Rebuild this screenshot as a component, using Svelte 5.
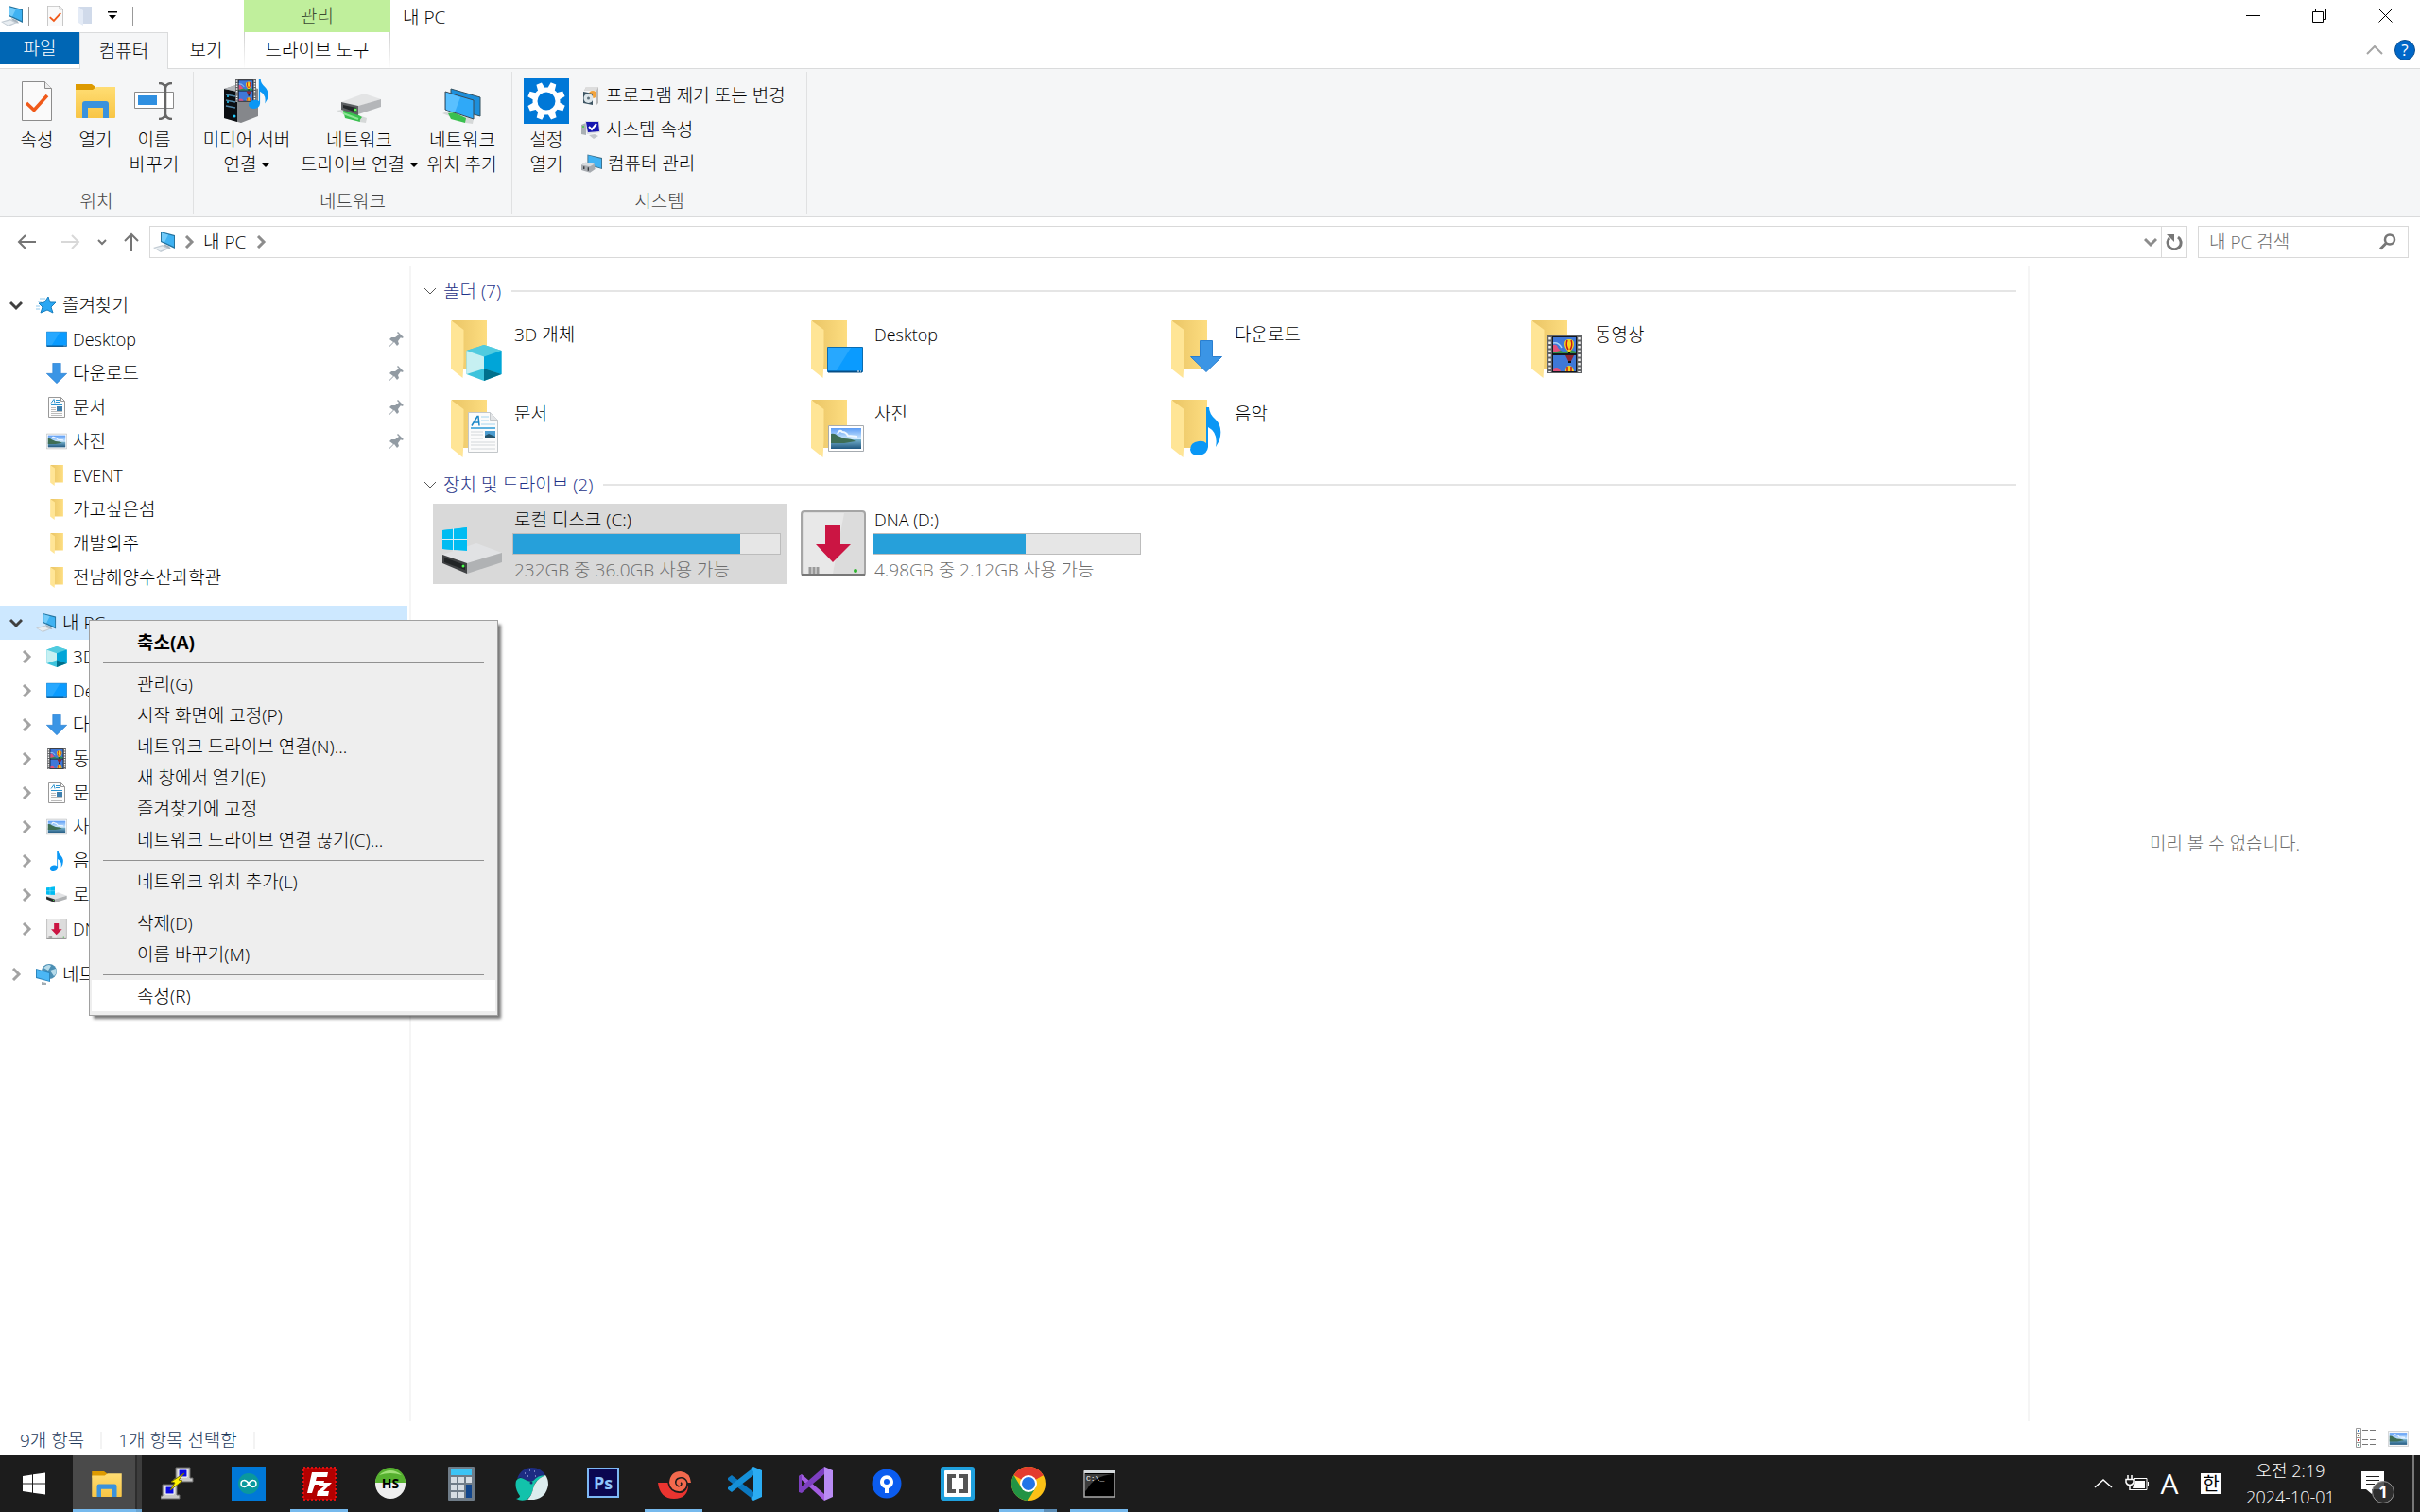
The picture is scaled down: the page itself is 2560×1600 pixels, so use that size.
<script lang="ts">
	type Place = { icon: string; label: string; pinned?: boolean; latin?: boolean };
	type Task = { id: string; label: string; state?: 'active' | 'open' | 'stacked' };

	const boxes: Record<string, string> = {
		pc: '0 0 24 22',
		sheet: '0 0 32 42',
		page: '0 0 15 20',
		explorer: '0 0 42 36',
		rename: '0 0 42 40',
		server: '0 0 48 46',
		netdrive: '0 0 48 32',
		netplace: '0 0 42 38',
		gear: '0 0 48 48',
		uninstall: '0 0 18 21',
		sysprops: '0 0 20 20',
		manage: '0 0 24 21',
		star: '0 0 22 18',
		desktop: '0 0 38 28',
		download: '0 0 34 34',
		doc: '0 0 32 43',
		note: '0 0 18 22',
		picture: '0 0 38 28',
		folder: '0 0 38 61',
		cube: '0 0 38 38',
		video: '0 0 36 40',
		music: '0 0 33 51',
		local: '0 0 64 50',
		removable: '0 0 70 70',
		network: '0 0 22 22',
		pin: '0 0 16 16',
		details: '0 0 22 22'
	};

	const quick: Place[] = [
		{ icon: 'desktop', label: 'Desktop', pinned: true, latin: true },
		{ icon: 'download', label: '다운로드', pinned: true },
		{ icon: 'note', label: '문서', pinned: true },
		{ icon: 'picture', label: '사진', pinned: true },
		{ icon: 'folder', label: 'EVENT', latin: true },
		{ icon: 'folder', label: '가고싶은섬' },
		{ icon: 'folder', label: '개발외주' },
		{ icon: 'folder', label: '전남해양수산과학관' }
	];

	const devices: Place[] = [
		{ icon: 'cube', label: '3D 개체' },
		{ icon: 'desktop', label: 'Desktop', latin: true },
		{ icon: 'download', label: '다운로드' },
		{ icon: 'video', label: '동영상' },
		{ icon: 'note', label: '문서' },
		{ icon: 'picture', label: '사진' },
		{ icon: 'music', label: '음악' },
		{ icon: 'local', label: '로컬 디스크 (C:)' },
		{ icon: 'removable', label: 'DNA (D:)', latin: true }
	];

	// where each badge sits on the 72px folder
	const folders = [
		{ icon: 'cube', label: '3D 개체', x: 27, y: 31, w: 38, h: 38 },
		{ icon: 'desktop', label: 'Desktop', x: 28, y: 33, w: 38, h: 28, latin: true },
		{ icon: 'download', label: '다운로드', x: 31, y: 26, w: 34, h: 34 },
		{ icon: 'video', label: '동영상', x: 28, y: 21, w: 36, h: 40 },
		{ icon: 'doc', label: '문서', x: 29, y: 18, w: 32, h: 43 },
		{ icon: 'picture', label: '사진', x: 29, y: 32, w: 38, h: 28 },
		{ icon: 'music', label: '음악', x: 31, y: 13, w: 33, h: 51 }
	];

	const drives = [
		{ icon: 'local', label: '로컬 디스크 (C:)', free: '232GB 중 36.0GB 사용 가능', used: 85 },
		{ icon: 'removable', label: 'DNA (D:)', free: '4.98GB 중 2.12GB 사용 가능', used: 57, latin: true }
	];

	const menu = [
		['축소(A)'],
		[
			'관리(G)',
			'시작 화면에 고정(P)',
			'네트워크 드라이브 연결(N)...',
			'새 창에서 열기(E)',
			'즐겨찾기에 고정',
			'네트워크 드라이브 연결 끊기(C)...'
		],
		['네트워크 위치 추가(L)'],
		['삭제(D)', '이름 바꾸기(M)'],
		['속성(R)']
	];

	const tasks: Task[] = [
		{ id: 'start', label: '시작' },
		{ id: 'files', label: '파일 탐색기', state: 'active' },
		{ id: 'putty', label: 'PuTTY' },
		{ id: 'arduino', label: 'Arduino' },
		{ id: 'filezilla', label: 'FileZilla', state: 'open' },
		{ id: 'heidi', label: 'HeidiSQL' },
		{ id: 'calc', label: '계산기' },
		{ id: 'whale', label: 'Whale' },
		{ id: 'ps', label: 'Photoshop' },
		{ id: 'nautilus', label: 'Nautilus', state: 'open' },
		{ id: 'vscode', label: 'VS Code' },
		{ id: 'vs', label: 'Visual Studio' },
		{ id: 'sourcetree', label: 'Sourcetree' },
		{ id: 'brackets', label: 'Brackets' },
		{ id: 'chrome', label: 'Chrome', state: 'stacked' },
		{ id: 'cmd', label: '명령 프롬프트', state: 'open' }
	];
</script>

{#snippet art(name: string)}
	{#if name === 'pc'}
		<path d="M8 0l15 4v14L8 11z" fill="#26749f" />
		<path d="M9 1.500l13 3.500v11L9 10z" fill="#3fb2f2" />
		<path d="M9 1.500l7 2-4 8-3-1.500z" fill="#73cbf9" />
		<path d="M11 13l6 2.500 2 3-6-.5z" fill="#a9b4bd" />
		<path d="M0 17l10-3 7 4-9 4z" fill="#c3ccd4" />
		<path d="M2 17.500l8-2 4.500 2.500-7 2.500z" fill="#e9eef2" />
	{:else if name === 'sheet'}
		<path d="M.5.5h24l7 7v34H.5z" fill="#fafafa" stroke="#8c8c8c" />
		<path d="M24.500.5v7h7" fill="#ececec" stroke="#8c8c8c" />
		<path d="M5 23l8 7.500L27 15" fill="none" stroke="#f05a1a" stroke-width="3.500" />
	{:else if name === 'page'}
		<path d="M0 0h14v18H5z" fill="#d0daea" />
		<path d="M0 0l5 4v16l-5-3z" fill="#e4ebf6" />
	{:else if name === 'explorer'}
		<path d="M0 0h17l4 3v6H0z" fill="#dd9a00" />
		<path d="M0 6h18l4-3h20v32q0 1-1 1H1q-1 0-1-1z" fill="url(#gold)" />
		<path d="M7 36V21q0-3 3-3h22q3 0 3 3v15h-6V25H13v11z" fill="#3a92dd" />
	{:else if name === 'rename'}
		<path d="M.5 10.500h41v17H.5z" fill="#fff" stroke="#8a8a8a" />
		<path d="M4 14h20v10H4z" fill="#2f8fe0" />
		<path d="M33 2v36M26 1q6 0 7 5 1-5 7-5M26 39q6 0 7-5 1 5 7 5" fill="none" stroke="#666" stroke-width="2.500" />
	{:else if name === 'server'}
		<path d="M0 10L16 5l20 5v29l-18 7-18-5z" fill="#85878b" />
		<path d="M0 10l14 3v32L0 41z" fill="#0b0e12" />
		<path d="M0 10L16 5l20 5-22 3z" fill="#b3b6ba" />
		<path d="M2 16l10 2M2 22l10 2M2 28l10 2" stroke="#4f84a5" stroke-width="1.500" />
		<circle cx="4" cy="18" r="1" fill="#2cf" /><circle cx="4" cy="24" r="1" fill="#2cf" />
		<circle cx="11" cy="39" r="1.500" fill="#2cf" />
		<svg x="12" y="0" width="22" height="24" viewBox="0 0 36 40" preserveAspectRatio="none">{@render art('video')}</svg>
		<svg x="26" y="0" width="21" height="31" viewBox="0 0 33 51" preserveAspectRatio="none">{@render art('music')}</svg>
	{:else if name === 'netdrive'}
		<path d="M0 18l6-1 26 9-1 5-7-1z" fill="#d5d8d8" />
		<path d="M7 18l6-1 14 8q-3 3-2 5L9 26z" fill="#3ac04f" />
		<path d="M7 21l16 6" stroke="#8be693" stroke-width="2" />
		<path d="M5 9L29 0l18 6-23 7z" fill="#e3e4e5" />
		<path d="M5 9l18 4v10L5 17z" fill="#5c5f62" />
		<path d="M7 12l14 3v5L7 15z" fill="#24282a" />
		<path d="M23 13l24-7v8l-24 8z" fill="#b4b6b9" />
		<circle cx="20" cy="17" r="1.500" fill="#5f5" />
	{:else if name === 'netplace'}
		<path d="M0 27l5-2 28 8-1 5-7-1z" fill="#d5d8d8" />
		<path d="M6 27l6-1 13 6-1 5-15-4z" fill="#3ac04f" />
		<path d="M9 1l31 9v20L9 21z" fill="#1d8fdb" stroke="#34515f" />
		<path d="M3 4l30 9v20L3 23z" fill="#2fa9f8" stroke="#3c4b55" />
		<path d="M4 5l15 5-6 16-9-3z" fill="#59c0ff" />
	{:else if name === 'gear'}
		<path d="M0 0h48v48H0z" fill="#0078d7" />
		<circle cx="24" cy="24" r="12" fill="none" stroke="#fff" stroke-width="5" />
		{#each [22, 67, 112, 157, 202, 247, 292, 337] as a}
			<path d="M20 11l1-7h6l1 7z" fill="#fff" transform="rotate({a} 24 24)" />
		{/each}
	{:else if name === 'uninstall'}
		<path d="M4 1h13v17l-3 3V5H2z" fill="#b9b9b9" />
		<path d="M4 1h13l-2 4H2z" fill="#ddd" />
		<circle cx="11" cy="9" r="4" fill="#f2a33c" />
		<path d="M1 6l10 2v12L1 18z" fill="#3d5563" />
		<circle cx="6.500" cy="13" r="5" fill="#dde6ea" /><circle cx="6.500" cy="13" r="1.500" fill="#60737d" />
	{:else if name === 'sysprops'}
		<path d="M0 5l5-2v13l-5-1z" fill="#aab0b4" />
		<path d="M4 1h15l1 12-14 2z" fill="#d9dbe2" />
		<path d="M5 2h13l1 10-12 1z" fill="#1515b0" />
		<path d="M8 7l3 3 5-6" fill="none" stroke="#fff" stroke-width="2" />
		<path d="M8 16l6-1 4 2-5 3z" fill="#c4c8cc" /><circle cx="2" cy="7" r="1" fill="#4c4" />
	{:else if name === 'manage'}
		<path d="M7 0l17 4v13L7 12z" fill="#3c6f8b" />
		<path d="M8 1l15 4v11L8 11z" fill="#42b3f3" />
		<path d="M0 12l5-3 10 2 1 6-6 4-10-3z" fill="#a7abb0" />
		<path d="M0 12l5-3 10 2-5 3z" fill="#d9dcdf" />
		<path d="M3 14v3M8 15v4" stroke="#383c40" stroke-width="1.500" />
	{:else if name === 'star'}
		<path d="M13 0l2 6 6 0-5 5 2 6-6-3-7 3 2-6-4-4 6-1z" fill="#2aa7f3" stroke="#1b7fbe" />
		<path d="M4 2h6M2 5h4M0 10h4M0 13h4" stroke="#8fc8ec" />
	{:else if name === 'desktop'}
		<path d="M.5.5h37v26H.5z" fill="#0a9bff" stroke="#0b6cb0" />
		<path d="M1 1h24L10 25H1z" fill="#27a8ff" />
		<path d="M1 26.500h36" stroke="#064e86" stroke-width="2" />
		<path d="M32 26h2M35 26h1" stroke="#fff" />
	{:else if name === 'download'}
		<path d="M10.500.5h13v17h10L17 33.500.5 17.500h10z" fill="#3b95e5" stroke="#2a7fd0" />
	{:else if name === 'doc'}
		<path d="M.5.5h23l8 8v34H.5z" fill="#fbfbfb" stroke="#c3c7ca" />
		<path d="M23.500.5v8h8" fill="#e4e6e8" stroke="#c3c7ca" />
		<path d="M4 14.500l6-10h1l1 10M6.500 11h5" fill="none" stroke="#1a86c7" stroke-width="1.500" />
		<path d="M14 5h8M14 9h8M14 13h15" stroke="#a6d5ee" />
		<path d="M3 17h26" stroke="#5fb2df" stroke-width="2" />
		<path d="M3 21h13M3 24h13M3 28h13M3 32h26M3 35h26M3 39h26" stroke="#d3d7da" />
		<path d="M18 20h11v8H18z" fill="#4c9ccf" /><path d="M18 25l4-2 7 3v2H18z" fill="#24536b" />
	{:else if name === 'note'}
		<path d="M.5.5h13l4 4v17H.5z" fill="#fdfdfd" stroke="#999" />
		<path d="M13.500.5v4h4" fill="none" stroke="#999" />
		<path d="M3 6.500l3-4 1 4M8 3.500h4M8 5.500h4M3 8.500h12" fill="none" stroke="#2b93cf" />
		<path d="M3 11.500h5M3 13.500h5M3 15.500h12M3 17.500h12M3 19.500h12" stroke="#bbb" />
		<path d="M9 10h6v5H9z" fill="#3d7fae" />
	{:else if name === 'picture'}
		<path d="M.5.5h37v27H.5z" fill="#fff" stroke="#a6abb0" />
		<path d="M3 3h32v12H3z" fill="url(#sky)" />
		<path d="M3 15h32v10H3z" fill="url(#sea)" />
		<path d="M3 9q4-1 7 2l7 3q8 0 12 3l-12 2H3z" fill="#3e6e55" />
		<path d="M10 9q2-5 5-2 4 0 6 4l10 1" fill="none" stroke="#eef7ff" stroke-width="2" />
	{:else if name === 'folder'}
		<path d="M1 0h37v51H12z" fill="url(#tan)" />
		<path d="M0 0l13.500 10v34l-1 17L0 51z" fill="#ffe596" />
	{:else if name === 'cube'}
		<path d="M19 0l18.500 6v25L19 38 .5 31V6z" fill="#3cc3dc" />
		<path d="M19 0l18.500 6L19 12.500.5 6z" fill="#50cbdf" />
		<path d="M.5 6L19 12.500V25L.5 31z" fill="#c6f0f2" />
		<path d="M37.500 6L19 12.500V25l18.500 6z" fill="#00a5d8" />
		<path d="M19 25l18.500 6L19 38z" fill="#00708c" />
	{:else if name === 'video'}
		<path d="M0 0h36v40H0z" fill="#616366" />
		<path d="M2.500 2v37M33.500 2v37" stroke="#f1f1f1" stroke-width="2.500" stroke-dasharray="2.500 2" />
		<path d="M5 1h26v38H5z" fill="#15181f" />
		<path d="M6 2h24v17H6zM6 21h24v17H6z" fill="#3f78d8" />
		<path d="M6 14l6 1 6 3 6-3 6 2v2H6z" fill="#2f8f4a" />
		<path d="M6 10q4-1 5 3l3 3-8 2zM6 35q6-3 8 3H6z" fill="#e0507a" />
		<path d="M6 8q6-1 9 5" fill="none" stroke="#a8d4f5" stroke-width="1.500" />
		<path d="M18 9q0-5 5-5t5 5q0 4-4 8h-2q-4-4-4-8zM19 38q0-6 4-6t5 6z" fill="#f6d51d" />
		<path d="M21 5q-2 5 1 10M25 5q2 5-1 10M21 33v5M25 33v5" fill="none" stroke="#c9151b" stroke-width="1.500" />
		<path d="M19 21h9l-3 6h-3z" fill="#8f2530" /><path d="M22 17h2v2h-2zM22 27h3v2h-3z" fill="#111" />
	{:else if name === 'music'}
		<path d="M17 0h3q0 7 7 13 8 8 4 22l-4 7q3-15-8-21v21q-1 8-10 9-8 0-9-6 0-8 9-9 5-1 8 2z" fill="#0a97f5" />
	{:else if name === 'local'}
		<path d="M0 3l11-1v10H0zM12 2l14-2v12H12zM0 13h11v11L0 23zM12 13h14v12l-14-1z" fill="#00bcf2" />
		<path d="M0 29l36-12 27 10-37 11z" fill="#e1e2e4" />
		<path d="M0 29l26 9v11L0 38z" fill="#404244" />
		<path d="M26 38l37-11v10L26 49z" fill="#b0b2b4" />
		<path d="M2 32l22 8v5L2 37z" fill="#222526" /><circle cx="22" cy="41" r="1.500" fill="#4cff4c" />
		<path d="M0 3l26-3v25L0 23z" fill="#00bcf2" /><path d="M11.500 1v24M0 12.500h26" stroke="#d9eef5" />
	{:else if name === 'removable'}
		<rect x="1" y="1" width="67" height="68" rx="3" fill="#dcdcdc" stroke="#a5a5a5" stroke-width="2" />
		<path d="M4 3h42L34 67H4z" fill="#e8e8e8" /><path d="M1 68h67" stroke="#777" stroke-width="2" />
		<path d="M26 16h16v20h11L34 55 16 36h10z" fill="#cb1543" />
		<path d="M10 60v7M14 60v7M18 60v7" stroke="#999" stroke-width="3" /><circle cx="58" cy="64" r="2" fill="#2db52d" />
	{:else if name === 'network'}
		<circle cx="14" cy="8" r="8" fill="#4b8fb4" />
		<path d="M8 4q5-5 8-2l-3 5zM15 7l6-2q2 5-2 8z" fill="#b6dbea" />
		<path d="M0 5l15 4v10L0 15z" fill="#2d86bd" /><path d="M1 6l13 4v8L1 14z" fill="#4bb7f5" />
		<path d="M6 19l5 1v2H6z" fill="#a4adb3" />
	{:else if name === 'pin'}
		<path d="M10 0l6 6-2 1-1-1-3 4 1 3-2 2-3-4-5 5H0l5-5-4-3 2-2h4l4-3-2-2z" fill="#929ba3" />
	{:else if name === 'details'}
		<path d="M.5.5h5v20h-5zM.5 5.500h5M.5 10.500h5M.5 15.500h5" fill="none" stroke="#999" />
		<path d="M7 2.500h6M15 2.500h6M7 7.500h6M15 7.500h6M7 12.500h6M15 12.500h6M7 17.500h6M15 17.500h6" stroke="#777" />
		<path d="M2 2h2v2H2z" fill="#3b7fc4" /><path d="M2 7h2v2H2z" fill="#897532" />
		<path d="M2 12h2v2H2z" fill="#c22" /><path d="M2 17h2v2H2z" fill="#6a9" />
	{/if}
{/snippet}

{#snippet icon(name: string, w: number, h: number)}
	<svg width={w} height={h} viewBox={boxes[name]} aria-hidden="true">{@render art(name)}</svg>
{/snippet}

{#snippet small(name: string)}
	<span class="small-icon">{@render icon(name, 22, 22)}</span>
{/snippet}

{#snippet chevron(dir: string, kind = 'thick')}
	<svg class="chev {dir} {kind}" width="14" height="14" viewBox="0 0 14 14" aria-hidden="true">
		<path d="M1 4l6 6 6-6" fill="none" stroke="currentColor" />
	</svg>
{/snippet}

{#snippet row(place: Place, child: boolean)}
	<button class="tree-row child" class:latin={place.latin}>
		<span class="twist">{#if child}{@render chevron('right')}{/if}</span>
		{@render small(place.icon)}
		<span class="grow">{place.label}</span>
		{#if place.pinned}{@render icon('pin', 16, 16)}{/if}
	</button>
{/snippet}

{#snippet groupHead(title: string)}
	<h2 class="group-head">{@render chevron('down', 'thin')}<span>{title}</span><i></i></h2>
{/snippet}

{#snippet taskIcon(id: string)}
	<svg width="36" height="36" viewBox="0 0 36 36" aria-hidden="true">
		{#if id === 'start'}
			<path d="M4 10l10-1.500V17.500H4zM15 8.300L28 6.500v11H15zM4 18.500h10v9L4 26zM15 18.500h13v11l-13-1.800z" fill="#fff" />
		{:else if id === 'files'}
			<svg x="2" y="5" width="32" height="27" viewBox="0 0 42 36">{@render art('explorer')}</svg>
		{:else if id === 'putty'}
			{#each [[16, 1], [2, 19]] as [x, y]}
				<path d="M{x} {y}h15v11h3v4H{x - 2}v-3h2z" fill="#c8c8c8" stroke="#666" />
				<path d="M{x + 3} {y + 2}h9v8h-9z" fill="#0a0ae0" stroke="#fff" />
			{/each}
			<path d="M25 7l-6 7 4 1-13 10 5-8-4-1z" fill="#fff200" stroke="#777000" />
		{:else if id === 'arduino'}
			<path d="M0 0h36v36H0z" fill="#0078d7" /><circle cx="18" cy="18" r="11" fill="#0a989d" />
			<path d="M18 18c-3-5-8-4-8 0s5 5 8 0c3-5 8-4 8 0s-5 5-8 0z" fill="none" stroke="#fff" stroke-width="1.500" />
		{:else if id === 'filezilla'}
			<path d="M1 1h34v34H1z" fill="#b30000" stroke="#d11" stroke-width="2" stroke-dasharray="2 2" />
			<path d="M10 6h17l-1 5H15l-1 4h9l-1 4h-9l-3 9H5zM18 17h13l-9 9h6l-1 5H15l1-5 8-6h-7z" fill="#fff" />
		{:else if id === 'heidi'}
			<circle cx="18" cy="18" r="16" fill="#eee" /><path d="M2 17a16 16 0 0 1 32 0z" fill="#56b12f" />
			<path d="M6 9q12-10 24 0-12-4-24 0z" fill="#9fe077" />
			<text x="18" y="23" text-anchor="middle" class="hs">HS</text>
		{:else if id === 'calc'}
			<rect x="4" y="0" width="28" height="36" rx="1" fill="#6f7c88" />
			<path d="M7 3h22v6H7z" fill="#3cc4f5" />
			<path d="M7 11h6v6H7zM15 11h6v6h-6zM23 11h6v6h-6zM7 19h6v6H7zM15 19h6v6h-6zM7 27h6v6H7zM15 27h6v6h-6z" fill="#d6dde3" />
			<path d="M23 19h6v14h-6z" fill="#12468c" />
		{:else if id === 'whale'}
			<path d="M2 13Q6 1 18 1q9 0 14 8-8 1-13 6-5 2-10-2-4-3-7 0z" fill="#1d2c83" />
			<path d="M1 15q3-5 8-2 6 4 10 2 5-6 13-6-12 6-13 14-1 8-7 12-6 2-11-1 4-1 4-3Q-1 23 1 15z" fill="#12c2ab" />
			<path d="M32 9q3 4 3 10-2 14-15 16h-7q5-5 6-12 2-9 13-14z" fill="#dcecee" />
			<circle cx="17" cy="17" r="1.500" fill="#16306e" />
			<path d="M10 7h1M15 4h1M13 10h1M20 5h1M21 10h1" stroke="#c7d0ff" />
		{:else if id === 'ps'}
			<path d="M2 2h32v30H2z" fill="#0b0750" stroke="#7db8f5" stroke-width="2" />
			<text x="18" y="24" text-anchor="middle" class="ps">Ps</text>
		{:else if id === 'nautilus'}
			<path d="M1 17h12q2 11 11 11 7 0 9-9 0 15-15 15Q3 34 1 17z" fill="#ea3430" />
			<path d="M13 17Q14 5 25 5q10 1 11 12h-4q0 10-8 10-10-1-11-10z" fill="#f2694d" />
			<path d="M12 17q2 10 12 10 8-1 8-10-2-6-8-5-5 1-4 6 2 4 5 2 2-2 0-3" fill="none" stroke="#1c1c1c" stroke-width="1.500" />
		{:else if id === 'vscode'}
			<path d="M0 12l4-3 23 18v8L0 14z" fill="#0b78c0" /><path d="M0 24l4 3L27 9V1L0 22z" fill="#1590d8" />
			<path d="M27 0l9 4v28l-9 4-3-2 3-3V5l-3-3z" fill="#2bacf2" />
		{:else if id === 'vs'}
			<path d="M0 10l3-2 24 21v7L3 14v11l-3 2z" fill="#a35de0" /><path d="M0 27l3 1L27 8V0L3 21V9L0 10z" fill="#7d3fc0" />
			<path d="M27 0l9 4v28l-9 4z" fill="#b98bf3" />
		{:else if id === 'sourcetree'}
			<circle cx="18" cy="18" r="15.500" fill="#0b5cef" />
			<path d="M16 28v-5a7 7 0 1 1 4 0v5z" fill="#fff" /><circle cx="18" cy="16" r="3" fill="#0b5cef" />
		{:else if id === 'brackets'}
			<rect width="36" height="36" rx="3" fill="#1fa0dd" />
			<rect x="4" y="4" width="28" height="28" rx="1" fill="#fff" />
			<path d="M7 8h9v4h-4v12h4v4H7zM29 8h-9v4h4v12h-4v4h9z" fill="#555" />
		{:else if id === 'chrome'}
			<circle cx="18" cy="18" r="18" fill="#fbc116" />
			<path d="M18 18L2.400 9a18 18 0 0 1 31.200 0z" fill="#e33b2e" />
			<path d="M18 9h15.600L18 18z" fill="#e33b2e" />
			<path d="M2.400 9a18 18 0 0 0 15 27l8.400-14-15.600 0z" fill="#229344" />
			<circle cx="18" cy="18" r="9" fill="#fff" /><circle cx="18" cy="18" r="7" fill="#2274e8" />
		{:else if id === 'cmd'}
			<path d="M2 5h32v27H2z" fill="#000" stroke="#aaa" stroke-width="1.500" /><path d="M2 4h32v3H2z" fill="#d5d9dc" />
			<path d="M3 8h29q-20 2-27 16l-2 2z" fill="#3c3c3c" /><text x="4" y="15" class="cmd">C:\_</text>
		{/if}
	</svg>
{/snippet}

<svg class="defs" width="0" height="0" aria-hidden="true">
	<defs>
		<linearGradient id="gold" x1="0" y1="0" x2="0" y2="1">
			<stop offset="0" stop-color="#ffdd73" /><stop offset="1" stop-color="#f8c545" />
		</linearGradient>
		<linearGradient id="tan"><stop offset="0" stop-color="#eac566" /><stop offset="1" stop-color="#fddd80" /></linearGradient>
		<linearGradient id="sky" x1="0" y1="0" x2="0" y2="1">
			<stop offset="0" stop-color="#5c9cf5" /><stop offset="1" stop-color="#d3edff" />
		</linearGradient>
		<linearGradient id="sea" x1="0" y1="0" x2="0" y2="1">
			<stop offset="0" stop-color="#79b4cf" /><stop offset="1" stop-color="#20577f" />
		</linearGradient>
	</defs>
</svg>

<div class="screen">
	<header>
		<div class="titlebar">
			<div class="quickbar">
				{@render icon('pc', 24, 22)}
				<i class="tick"></i>
				<button aria-label="속성">{@render icon('sheet', 17, 22)}</button>
				<button aria-label="새 폴더">{@render icon('page', 15, 20)}</button>
				<button aria-label="사용자 지정">
					<svg width="10" height="10" viewBox="0 0 10 10"><path d="M0 0h10v1.500H0zM1 4h8L5 8.500z" /></svg>
				</button>
				<i class="tick"></i>
			</div>
			<div class="context-tab">관리</div>
			<h1>내 PC</h1>
			<div class="window-buttons">
				<button aria-label="최소화"><svg width="16" height="16"><path d="M0 7.500h15" stroke="#000" /></svg></button>
				<button aria-label="이전 크기로 복원">
					<svg width="16" height="16"><path d="M.5 3.500h11v11H.5zM3.500 3.500v-3h11v11h-3" fill="none" stroke="#000" /></svg>
				</button>
				<button aria-label="닫기"><svg width="16" height="16"><path d="M.5.5l14 14M14.500.5l-14 14" stroke="#000" /></svg></button>
			</div>
		</div>

		<nav class="tabs">
			<button class="file">파일</button>
			<button class="tab current">컴퓨터</button>
			<button class="tab view">보기</button>
			<button class="tab tools">드라이브 도구</button>
			<div class="tabs-end">
				<svg width="18" height="10" viewBox="0 0 18 10"><path d="M1 9l8-8 8 8" fill="none" stroke="#a5a5a5" stroke-width="2" /></svg>
				<button class="help" aria-label="도움말">?</button>
			</div>
		</nav>
	</header>

	<div class="ribbon">
		<section class="group place">
			<div class="tools-row">
				<button class="big"><span class="art">{@render icon('sheet', 32, 42)}</span>속성</button>
				<button class="big"><span class="art">{@render icon('explorer', 42, 36)}</span>열기</button>
				<button class="big"><span class="art">{@render icon('rename', 42, 40)}</span>이름<br />바꾸기</button>
			</div>
			<h3>위치</h3>
		</section>
		<section class="group net">
			<div class="tools-row">
				<button class="big media"><span class="art">{@render icon('server', 48, 46)}</span>미디어 서버<br /><span class="drop">연결</span></button>
				<button class="big mapdrive"><span class="art low">{@render icon('netdrive', 48, 32)}</span>네트워크<br /><span class="drop">드라이브 연결</span></button>
				<button class="big location"><span class="art low">{@render icon('netplace', 42, 38)}</span>네트워크<br />위치 추가</button>
			</div>
			<h3>네트워크</h3>
		</section>
		<section class="group system">
			<div class="tools-row">
				<button class="big"><span class="art">{@render icon('gear', 48, 48)}</span>설정<br />열기</button>
				<div class="stack">
					<button>{@render icon('uninstall', 20, 21)}프로그램 제거 또는 변경</button>
					<button>{@render icon('sysprops', 20, 20)}시스템 속성</button>
					<button>{@render icon('manage', 22, 20)}컴퓨터 관리</button>
				</div>
			</div>
			<h3>시스템</h3>
		</section>
	</div>

	<div class="addressbar">
		<div class="history">
			<button aria-label="뒤로"><svg width="20" height="16" viewBox="0 0 20 16"><path d="M9 1L2 8l7 7M2 8h18" /></svg></button>
			<button class="off" aria-label="앞으로"><svg width="20" height="16" viewBox="0 0 20 16"><path d="M11 1l7 7-7 7M18 8H0" /></svg></button>
			<button class="recent" aria-label="최근 위치"><svg width="10" height="8" viewBox="0 0 10 8"><path d="M1 2l4 4 4-4" /></svg></button>
			<button aria-label="위로"><svg width="16" height="20" viewBox="0 0 16 20"><path d="M1 9l7-7 7 7M8 2v18" /></svg></button>
		</div>
		<div class="path">
			{@render icon('pc', 24, 22)}
			{@render chevron('right')}
			<a href="#pc">내 PC</a>
			{@render chevron('right')}
			<button class="expand" aria-label="이전 위치">{@render chevron('down')}</button>
			<button class="refresh" aria-label="새로 고침">
				<svg width="18" height="18" viewBox="0 0 18 18"><path d="M4 5a7 7 0 1 0 9-1" fill="none" stroke="#777" stroke-width="3" /><path d="M1 1h8v8z" fill="#777" /></svg>
			</button>
		</div>
		<label class="search">
			<input type="search" placeholder="내 PC 검색" aria-label="내 PC 검색" />
			<svg width="18" height="18" viewBox="0 0 18 18"><circle cx="11" cy="6.500" r="5" fill="none" stroke="#777" stroke-width="2.500" /><path d="M7 10.500l-6 6" stroke="#777" stroke-width="3" /></svg>
		</label>
	</div>

	<div class="body">
		<nav class="tree">
			<button class="tree-row">
				<span class="twist dark">{@render chevron('down')}</span>
				{@render small('star')}<span class="grow">즐겨찾기</span>
			</button>
			{#each quick as place}{@render row(place, false)}{/each}
			<button class="tree-row selected gap">
				<span class="twist dark">{@render chevron('down')}</span>
				{@render small('pc')}<span class="grow">내 PC</span>
			</button>
			{#each devices as place}{@render row(place, true)}{/each}
			<button class="tree-row gap">
				<span class="twist">{@render chevron('right')}</span>
				{@render small('network')}<span class="grow">네트워크</span>
			</button>
		</nav>

		<main>
			{@render groupHead('폴더 (7)')}
			<div class="tiles">
				{#each folders as f}
					<button class="tile">
						<svg width="72" height="72" viewBox="0 0 72 72" aria-hidden="true">
							<svg x="11" y="5" width="38" height="61" viewBox={boxes.folder}>{@render art('folder')}</svg>
							<svg x={f.x} y={f.y} width={f.w} height={f.h} viewBox={boxes[f.icon]}>{@render art(f.icon)}</svg>
						</svg>
						<span class="name" class:latin={f.latin}>{f.label}</span>
					</button>
				{/each}
			</div>
			{@render groupHead('장치 및 드라이브 (2)')}
			<div class="tiles">
				{#each drives as d, i}
					<button class="tile drive" class:selected={i === 0}>
						<span class="drive-art">{@render icon(d.icon, i === 0 ? 64 : 70, i === 0 ? 50 : 70)}</span>
						<span class="info">
							<span class:latin={d.latin}>{d.label}</span>
							<span class="meter"><span style="width: {d.used}%"></span></span>
							<span class="free">{d.free}</span>
						</span>
					</button>
				{/each}
			</div>
		</main>

		<aside>미리 볼 수 없습니다.</aside>
	</div>

	<footer class="status">
		<span>9개 항목</span>
		<span>1개 항목 선택함</span>
		<div class="views">
			<button aria-label="자세히">{@render icon('details', 22, 22)}</button>
			<button aria-label="큰 아이콘">{@render icon('picture', 22, 17)}</button>
		</div>
	</footer>

	<div class="taskbar">
		{#each tasks as t}
			<button class="task {t.state ?? ''}" aria-label={t.label}>{@render taskIcon(t.id)}</button>
		{/each}
		<div class="tray">
			<svg width="20" height="12" viewBox="0 0 20 12"><path d="M1 10l9-8 9 8" fill="none" stroke="#fff" stroke-width="1.500" /></svg>
			<svg class="battery" width="26" height="18" viewBox="0 0 26 18">
				<path d="M9 3.500h14v12H5M24.500 7v5" fill="none" stroke="#fff" /><path d="M10 6h11v8H8z" fill="#fff" />
				<path d="M3 0v4M7 0v4M1 4.500h8v3q-1 3-4 3t-4-3zM5 10v6" fill="none" stroke="#fff" stroke-width="1.500" />
			</svg>
			<span class="caps">A</span>
			<span class="ime">한</span>
			<time>오전 2:19<br />2024-10-01</time>
			<button class="notice" aria-label="알림">
				<svg width="26" height="26" viewBox="0 0 26 26"><path d="M0 0h24v19H11l0 5-6-5H0z" fill="#fff" /><path d="M5 5.500h14M5 9.500h14M5 13.500h9" stroke="#222" /></svg>
				<span class="badge">1</span>
			</button>
			<i class="peek"></i>
		</div>
	</div>

	<ul class="menu">
		{#each menu as section, i}
			{#if i > 0}<li class="rule"></li>{/if}
			{#each section as item}
				<li><button class:strong={i === 0} class:hover={i === 4}>{item}</button></li>
			{/each}
		{/each}
	</ul>
</div>

<style>
	:global(body) {
		margin: 0;
		background: #fff;
	}

	.screen {
		position: relative;
		display: flex;
		flex-direction: column;
		min-height: 100vh;
		font: 300 19px/26px 'Open Sans', 'Noto Sans CJK KR', sans-serif;
		color: #000;
	}

	button {
		padding: 0;
		border: 0;
		background: none;
		font: inherit;
		color: inherit;
	}

	svg {
		display: block;
		flex: none;
	}

	.defs {
		position: absolute;
	}

	h1,
	h2,
	h3 {
		margin: 0;
		font: inherit;
	}

	/* title bar */
	.titlebar {
		display: flex;
		height: 34px;
	}

	.quickbar {
		display: flex;
		align-items: center;
		box-sizing: border-box;
		width: 258px;
		padding-left: 1px;
		gap: 16px;
	}

	.tick {
		width: 1px;
		height: 20px;
		margin: 0 3px 0 -11px;
		background: #999;
	}

	.tick:last-child {
		margin: 0;
	}

	.context-tab {
		width: 155px;
		background: #c0ef9c;
		color: #3b4b32;
		line-height: 34px;
		text-align: center;
	}

	h1 {
		flex: 1;
		padding-left: 13px;
		line-height: 36px;
	}

	.window-buttons {
		display: flex;
		padding-right: 28px;
		gap: 54px;
	}

	/* tabs */
	.tabs {
		display: flex;
		height: 38px;
		border-bottom: 1px solid #dadbdc;
	}

	.file {
		width: 84px;
		height: 34px;
		background: #0066b4;
		color: #fff;
	}

	.tab {
		height: 38px;
	}

	.current {
		width: 94px;
		height: 39px;
		border: 1px solid #dadbdc;
		border-bottom: 0;
		background: #f5f6f7;
	}

	.view {
		width: 80px;
	}

	.tools {
		width: 155px;
		border-right: 1px solid;
		border-left: 1px solid;
		border-image: linear-gradient(#ccc, #fff) 1;
	}

	.tabs-end {
		display: flex;
		flex: 1;
		align-items: center;
		justify-content: flex-end;
		padding-right: 5px;
		gap: 12px;
	}

	.help {
		width: 22px;
		height: 22px;
		border: 1px solid #0b4f91;
		border-radius: 50%;
		background: #0067c8;
		color: #fff;
		font-size: 17px;
		font-weight: 400;
		line-height: 20px;
	}

	/* ribbon */
	.ribbon {
		display: flex;
		height: 156px;
		border-bottom: 1px solid #dadbdc;
		background: #f5f6f7;
	}

	.group {
		display: flex;
		flex-direction: column;
		justify-content: space-between;
		margin: 3px 0;
		border-right: 1px solid #e0e1e2;
	}

	.group h3 {
		color: #444;
		text-align: center;
	}

	.tools-row {
		display: flex;
		align-items: flex-start;
		padding: 7px 10px 0 4px;
	}

	.place .tools-row {
		padding-left: 8px;
	}

	.big {
		width: 62px;
		white-space: nowrap;
	}

	.art {
		display: flex;
		align-items: center;
		justify-content: center;
		height: 48px;
		margin-bottom: 4px;
	}

	.art.low {
		align-items: flex-end;
	}

	.media {
		width: 104px;
	}

	.mapdrive {
		width: 134px;
	}

	.location {
		width: 84px;
	}

	.drop::after {
		content: '';
		display: inline-block;
		margin-left: 6px;
		border: 4px solid transparent;
		border-top-color: #000;
		border-bottom: 0;
		vertical-align: 4px;
	}

	.system {
		width: 311px;
	}

	.system .tools-row {
		padding-left: 5px;
	}

	.stack {
		display: flex;
		flex-direction: column;
		padding-left: 6px;
	}

	.stack button {
		display: flex;
		align-items: center;
		height: 36px;
		gap: 6px;
		white-space: nowrap;
	}

	/* address bar */
	.addressbar {
		display: flex;
		align-items: center;
		height: 52px;
		padding-right: 12px;
	}

	.history {
		display: flex;
		align-items: center;
		box-sizing: border-box;
		width: 158px;
		padding-left: 18px;
		gap: 18px;
	}

	.history .off {
		margin-left: 9px;
	}

	.history path {
		fill: none;
		stroke: #757575;
		stroke-width: 2;
	}

	.history .off path {
		stroke: #d8d8d8;
	}

	.path,
	.search {
		display: flex;
		align-items: center;
		box-sizing: border-box;
		height: 34px;
		border: 1px solid #d9d9d9;
	}

	.path {
		flex: 1;
		padding-left: 3px;
		gap: 7px;
		color: #757575;
	}

	.path a {
		margin: 0 2px 0 1px;
		color: #000;
		text-decoration: none;
	}

	.expand {
		margin-left: auto;
	}

	.refresh {
		display: flex;
		align-items: center;
		justify-content: center;
		width: 26px;
		height: 32px;
		margin-left: -3px;
		border-left: 1px solid #d9d9d9;
	}

	.search {
		width: 223px;
		margin-left: 12px;
		padding: 0 12px 0 11px;
	}

	.search input {
		flex: 1;
		min-width: 0;
		padding: 0;
		border: 0;
		outline: 0;
		background: none;
		font: inherit;
	}

	.search input::placeholder {
		color: #6d6d6d;
		opacity: 1;
	}

	.chev {
		color: #8c8c8c;
		stroke-width: 3;
	}

	.chev.right {
		transform: rotate(-90deg);
	}

	.chev.thin {
		color: #555;
		stroke-width: 1;
	}

	/* panes */
	.body {
		display: flex;
		flex: 1;
	}

	.tree {
		display: flex;
		flex-direction: column;
		box-sizing: border-box;
		width: 435px;
		padding: 23px 2px 0 0;
		border-right: 2px solid #f5f5f5;
	}

	.tree-row {
		display: flex;
		align-items: center;
		height: 36px;
		padding: 0 4px 0 10px;
		text-align: left;
		white-space: nowrap;
	}

	.tree-row.child {
		padding-left: 21px;
	}

	.tree-row.gap {
		margin-top: 12px;
	}

	.tree-row.selected {
		background: #cde8ff;
	}

	.twist {
		width: 28px;
	}

	.twist .chev {
		color: #a3a3a3;
	}

	.dark :global(.chev) {
		color: #404040;
	}

	.small-icon {
		width: 22px;
		margin-right: 6px;
	}

	.grow {
		flex: 1;
	}

	.latin {
		font-size: 18px;
	}

	main {
		flex: 1;
		padding: 9px 12px 0 13px;
	}

	.group-head {
		display: flex;
		align-items: center;
		height: 34px;
		margin-bottom: 3px;
		color: #1e3287;
	}

	.group-head span {
		margin: 0 11px 0 7px;
	}

	.group-head i {
		flex: 1;
		height: 2px;
		background: #e5e5e5;
	}

	.tiles {
		display: grid;
		grid-template-columns: repeat(auto-fill, 375px);
		column-gap: 6px;
		padding-left: 10px;
	}

	.tile {
		display: flex;
		box-sizing: border-box;
		height: 84px;
		padding: 6px 7px 0 8px;
		gap: 6px;
		text-align: left;
	}

	.tile .name {
		margin-top: 7px;
	}

	.drive {
		height: 85px;
		padding: 4px 7px 0 8px;
		gap: 4px;
	}

	.drive.selected {
		background: #d9d9d9;
	}

	.drive-art {
		display: flex;
		align-items: center;
		width: 72px;
		height: 76px;
	}

	.selected .drive-art {
		align-items: flex-end;
		box-sizing: border-box;
		padding: 0 0 5px 2px;
	}

	.info {
		display: flex;
		flex: 1;
		flex-direction: column;
	}

	.info > span:not(.meter) {
		padding-left: 2px;
	}

	.meter {
		box-sizing: border-box;
		height: 23px;
		margin: 1px 0 3px;
		border: 1px solid #bcbcbc;
		background: #e6e6e6;
	}

	.meter span {
		display: block;
		height: 100%;
		background: #26a0da;
	}

	.free {
		color: #6d6d6d;
	}

	aside {
		display: flex;
		align-items: center;
		justify-content: center;
		box-sizing: border-box;
		width: 415px;
		border-left: 2px solid #f5f5f5;
		color: #6d6d6d;
	}

	/* status bar */
	.status {
		display: flex;
		align-items: center;
		height: 36px;
		padding: 0 12px 0 4px;
		color: #1e395b;
	}

	.status > span {
		margin-top: 3px;
		padding: 0 17px;
		border-right: 2px solid #f3f3f3;
		line-height: 18px;
	}

	.views {
		display: flex;
		align-items: center;
		margin-left: auto;
		gap: 12px;
	}

	/* taskbar */
	.taskbar {
		display: flex;
		height: 60px;
		background: #1c1c1c;
		color: #fff;
	}

	.task {
		display: flex;
		align-items: center;
		justify-content: center;
		width: 75px;
	}

	.open {
		background: linear-gradient(#76b9ed, #76b9ed) center bottom / 61px 3px no-repeat;
	}

	.stacked {
		background:
			linear-gradient(90deg, #76b9ed 47px, #5b8cb5 47px) center bottom / 61px 3px no-repeat;
	}

	.active {
		background:
			linear-gradient(90deg, #76b9ed 67px, #6aa5d3 67px) right bottom / 73px 3px no-repeat,
			linear-gradient(90deg, #4a4a4a 66px, #2d2d2d 66px, #2d2d2d 68px, #3d3d3d 68px) right / 73px 60px no-repeat;
	}

	.tray {
		display: flex;
		align-items: center;
		margin-left: auto;
	}

	.battery {
		margin: 0 10px 0 13px;
	}

	.caps {
		width: 22px;
		font-size: 30px;
		font-weight: 400;
		text-align: center;
	}

	.ime {
		width: 22px;
		height: 22px;
		margin: 0 25px 0 22px;
		background: #fff;
		color: #000;
		font-weight: 400;
		line-height: 22px;
		text-align: center;
	}

	time {
		width: 96px;
		font-size: 18px;
		line-height: 28px;
		text-align: center;
	}

	.notice {
		position: relative;
		margin: 0 28px 0 27px;
	}

	.badge {
		position: absolute;
		top: 10px;
		left: 11px;
		width: 22px;
		height: 22px;
		border: 1px solid #999;
		border-radius: 50%;
		background: #333c;
		font-size: 17px;
		font-weight: 700;
		line-height: 22px;
		text-align: center;
	}

	.peek {
		width: 2px;
		height: 60px;
		margin-right: 6px;
		background: #777;
	}

	.hs {
		font: 700 14px 'Open Sans', sans-serif;
	}

	.ps {
		fill: #8ec5fc;
		font: 700 18px 'Open Sans', sans-serif;
	}

	.cmd {
		fill: #fff;
		font: 8px 'Liberation Mono', monospace;
	}

	/* context menu */
	.menu {
		position: absolute;
		top: 656px;
		left: 94px;
		box-sizing: border-box;
		width: 433px;
		margin: 0;
		padding: 6px 2px 4px;
		border: 1px solid #a0a0a0;
		background: #eee;
		box-shadow: 4px 4px 3px -1px #0008;
		list-style: none;
	}

	.menu button {
		display: block;
		width: 100%;
		height: 33px;
		padding-left: 48px;
		text-align: left;
	}

	.menu .hover {
		background: #fff;
	}

	.menu .strong {
		font-weight: 700;
	}

	.rule {
		height: 1px;
		margin: 5px 12px;
		background: #919191;
	}
</style>
